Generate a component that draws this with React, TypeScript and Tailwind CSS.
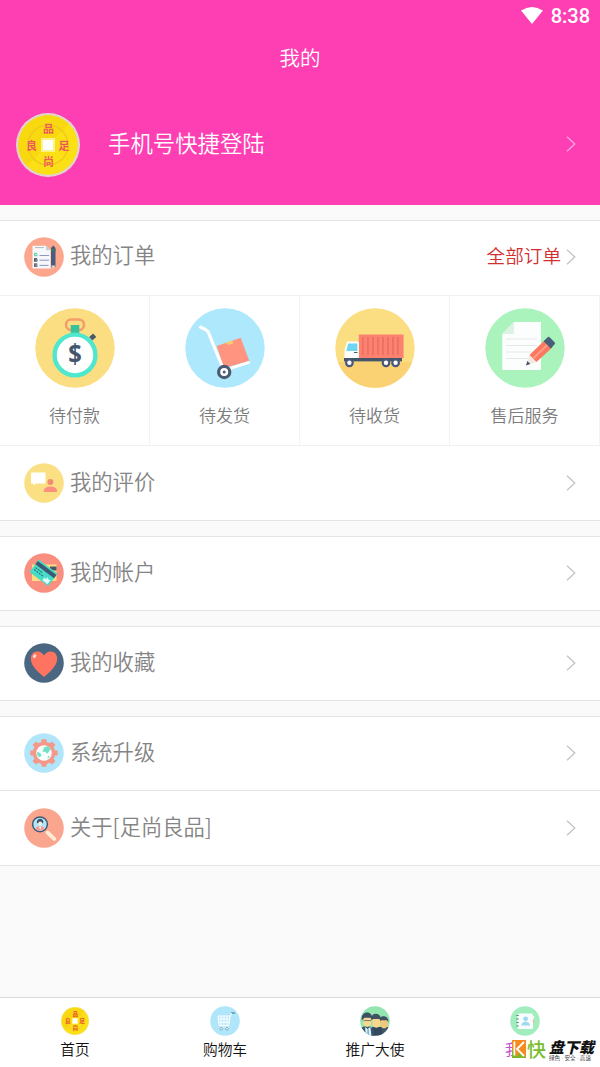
import type { ReactNode } from "react";

type IconProps = { className?: string };

const FONT = "font-['Roboto','Noto_Sans_CJK_SC',sans-serif]";

function Coin({ className, ring = "#e3d3cf", text = "#ee5a5c", size = 11 }: IconProps & { ring?: string; text?: string; size?: number }) {
  return (
    <svg viewBox="0 0 64 64" className={className}>
      <circle cx="32" cy="32" r="32" fill={ring} />
      <circle cx="32" cy="32" r="29.8" fill="#fbe016" />
      <path d="M11 11a29.8 29.8 0 0 0 0 42l42-42a29.8 29.8 0 0 0-42 0z" fill="#f6d50e" opacity=".7" />
      <circle cx="32" cy="32" r="20" fill="none" stroke="#f3c81c" strokeWidth="1.5" />
      <rect x="25" y="25" width="14" height="14" fill="#fbf28c" />
      <rect x="27" y="27" width="10" height="10" fill="#fff" />
      <g fill={text} fontSize={size} fontWeight="700" textAnchor="middle" fontFamily="Noto Sans CJK SC, sans-serif">
        <text x="32.5" y="20">品</text>
        <text x="15.5" y="37">良</text>
        <text x="48" y="37">足</text>
        <text x="32.5" y="52.5">尚</text>
      </g>
    </svg>
  );
}

function StopwatchIcon() {
  return (
    <svg viewBox="0 0 80 80" className="size-20">
      <circle cx="40" cy="40" r="39.7" fill="#fbde82" />
      <rect x="31" y="11.5" width="18" height="10.5" rx="5.2" fill="none" stroke="#f0a06a" strokeWidth="2.6" />
      <rect x="35.7" y="17" width="8.6" height="9" fill="#38c29b" />
      <rect x="55" y="26.7" width="5.4" height="4.6" fill="#47596b" transform="rotate(-42 57.7 29)" />
      <circle cx="40" cy="47" r="20.4" fill="#fff" stroke="#4fe8ce" strokeWidth="4.4" />
      <text x="40" y="56.2" fontSize="27" fontWeight="700" textAnchor="middle" fill="#42566e" textLength="13.5" lengthAdjust="spacingAndGlyphs" fontFamily="Noto Sans, sans-serif">$</text>
    </svg>
  );
}

function TrolleyIcon() {
  return (
    <svg viewBox="0 0 80 80" className="size-20">
      <circle cx="40" cy="40" r="39.7" fill="#aee8fd" />
      <path d="M31.7 38l24-8.3 8.6 23.3L39 60z" fill="#ff9480" />
      <path d="M40.8 34.9l6.6-2.3 1 2.6-5 1.7z" fill="#fcd067" />
      <path d="M15.5 19.2l4.5 2 3 2.3L37 58" fill="none" stroke="#fff" strokeWidth="3.2" strokeLinecap="round" strokeLinejoin="round" />
      <path d="M43 61.2l21.8-7" stroke="#fff" strokeWidth="2.8" />
      <circle cx="39.2" cy="64" r="5.6" fill="#fff" stroke="#4a5b73" strokeWidth="3.2" />
      <circle cx="39.2" cy="64" r="1.5" fill="#4a5b73" />
    </svg>
  );
}

function TruckIcon() {
  return (
    <svg viewBox="0 0 80 80" className="size-20">
      <circle cx="40" cy="40" r="39.7" fill="#fbde82" />
      <path d="M2.8 54h74.4a39.7 39.7 0 0 1-74.4 0z" fill="#fbd273" />
      <rect x="23.8" y="26.5" width="44.8" height="23.5" fill="#fb8270" />
      <path d="M28 29v18M33 29v18M38 29v18M43 29v18M48 29v18M53 29v18M58 29v18M63 29v18" stroke="#e8685a" strokeWidth="1.2" />
      <path d="M12 33.5h11.8V50H9.5v-8z" fill="#fdfdfd" />
      <path d="M13.2 35.5h9.2V43H11.3z" fill="#6fd6f2" />
      <path d="M19 44.5h3.5" stroke="#47596b" strokeWidth="1" />
      <rect x="9" y="50" width="58" height="3.4" fill="#465468" />
      <g fill="#fff" stroke="#47597a" strokeWidth="2.2">
        <circle cx="14.4" cy="54.8" r="3.3" />
        <circle cx="51" cy="54.8" r="3.3" />
        <circle cx="60.6" cy="54.8" r="3.3" />
      </g>
    </svg>
  );
}

function ServiceIcon() {
  return (
    <svg viewBox="0 0 80 80" className="size-20">
      <circle cx="40" cy="40" r="39.7" fill="#abf3bd" />
      <path d="M29 14h27v48H17.3V26z" fill="#fcfdfd" />
      <path d="M29 14v12H17.3z" fill="#dcf3e3" />
      <path d="M21 31h31M21 37.5h31M21 44h28M21 50.5h22" stroke="#e3e8ea" strokeWidth="1" />
      <path d="M41 57.5l3.5-10.5 7 7z" fill="#f3e9e2" />
      <path d="M41 57.5l1.3-4.4 3 3z" fill="#42566e" />
      <path d="M44.5 47L60.2 31.8l7.3 7.4L51.5 54z" fill="#fb7760" />
      <path d="M48.2 50.4l15.6-14.8" stroke="#ff9c86" strokeWidth="2" />
      <path d="M58.6 33.2l4-4q1-1 2 0l5 5q1 1 0 2l-3.8 4.4z" fill="#47607a" />
    </svg>
  );
}

function OrderIcon() {
  return (
    <svg viewBox="0 0 40 40" className="size-10">
      <circle cx="20" cy="20" r="19.8" fill="#fba68d" />
      <path d="M8.5 8.7H22l4.5 4.6v18.2h-18z" fill="#f5f7fa" />
      <path d="M22 8.7v4.6h4.5z" fill="#c5ccd4" />
      <path d="M11 10.6h9" stroke="#a7a9b8" strokeWidth=".8" />
      <path d="M15.5 18.5h9.5M15.5 23.2h9.5M15.5 28.4h9" stroke="#7f8dbb" strokeWidth=".9" />
      <rect x="10" y="15.8" width="3.4" height="3.4" fill="#69cfae" />
      <rect x="10" y="21.2" width="3.4" height="3.4" fill="#364a5d" />
      <rect x="10" y="26.4" width="3.4" height="3.4" fill="#4e596c" />
      <path d="M11 17l1 1 2.4-2.6M11 22.5l1 1 2.4-2.6M11 27.6l1 1 2.4-2.6" fill="none" stroke="#fff" strokeWidth=".6" />
      <path d="M27 11l2.3-2.5 2.2 2.5v19h-4.5z" fill="#4a5b80" />
      <path d="M27 12h4.5v2.4H27z" fill="#3c7563" />
      <path d="M27 28.5h4.5l-2.2 3.2z" fill="#d9d7d8" />
    </svg>
  );
}

function CommentIcon() {
  return (
    <svg viewBox="0 0 40 40" className="size-10">
      <circle cx="20" cy="20" r="19.8" fill="#fbe083" />
      <path d="M7 9.5h14.5v11H12l-2.5 2v-2H7z" fill="#fff" />
      <circle cx="26.4" cy="19" r="3" fill="#f28d6f" />
      <path d="M19.8 29c-.6-4 3-5.6 6.6-5.6s7.2 1.6 6.6 5.6z" fill="#fb9080" />
    </svg>
  );
}

function AccountIcon() {
  return (
    <svg viewBox="0 0 40 40" className="size-10">
      <circle cx="20" cy="20" r="19.8" fill="#fa8f7f" />
      <rect x="8" y="11.5" width="24.5" height="16.5" fill="#fbdc80" />
      <rect x="26" y="13.5" width="6.5" height="4" fill="#49586a" />
      <g transform="rotate(37 19.5 19.8)">
        <rect x="7.8" y="12" width="23.4" height="15.6" rx="1" fill="#45dcc8" />
        <rect x="7.8" y="13.8" width="23.4" height="4" fill="#3f5873" />
        <path d="M10 20.4h8M10 22.8h12" stroke="#2d6b72" strokeWidth="1" strokeDasharray="2 1" />
        <rect x="23" y="23" width="6.5" height="3.5" fill="#c9fff2" />
      </g>
      <path d="M23.3 24l1.2 2.4 2.5 1.2-2.5 1.2-1.2 2.4-1.2-2.4-2.5-1.2 2.5-1.2z" fill="#dffff8" />
    </svg>
  );
}

function HeartIcon() {
  return (
    <svg viewBox="0 0 40 40" className="size-10">
      <circle cx="20" cy="20" r="19.8" fill="#4b6681" />
      <path d="M20 34C16 30.5 6.8 24 6.8 15.6 6.8 11.2 9.6 8.4 13.2 8.4c3.2 0 5.6 1.8 6.8 4 1.2-2.2 3.6-4 6.8-4 3.6 0 6.4 2.8 6.4 7.2C33.2 24 24 30.5 20 34z" fill="#fe7460" />
      <ellipse cx="10.6" cy="13.2" rx="1.5" ry="2" fill="#ffe1da" transform="rotate(35 10.6 13.2)" />
    </svg>
  );
}

function UpgradeIcon() {
  return (
    <svg viewBox="0 0 40 40" className="size-10">
      <circle cx="20" cy="20" r="19.8" fill="#b1e6fa" />
      <g fill="#f5988a">
        <circle cx="20" cy="20" r="11.2" />
        <rect x="17.4" y="6.2" width="5.2" height="27.6" rx="1" />
        <rect x="17.4" y="6.2" width="5.2" height="27.6" rx="1" transform="rotate(45 20 20)" />
        <rect x="17.4" y="6.2" width="5.2" height="27.6" rx="1" transform="rotate(90 20 20)" />
        <rect x="17.4" y="6.2" width="5.2" height="27.6" rx="1" transform="rotate(135 20 20)" />
      </g>
      <circle cx="20" cy="20" r="7.8" fill="#f6fffd" />
      <path d="M20 14.5l4-1.5 3 3-2 2.5-2 2.6-1.5-2.4-3 .2zM13 19l3 .8 1.4 2.4-1.6 2.2-2.4-1.8zM24 23l2 .5-2.4 2.6z" fill="#74e0c8" />
    </svg>
  );
}

function AboutIcon() {
  return (
    <svg viewBox="0 0 40 40" className="size-10">
      <circle cx="20" cy="20" r="19.8" fill="#faa58e" />
      <path d="M23.5 24.5l6.8 6.4" stroke="#fdebd3" strokeWidth="3.8" strokeLinecap="round" />
      <circle cx="16" cy="16.3" r="7.4" fill="#aee6f8" stroke="#425a72" strokeWidth="1.5" />
      <path d="M12.8 14.5c0-5 6.6-5 6.6-.2l-1 1.2h-4.6z" fill="#3e566b" />
      <circle cx="16.2" cy="15.4" r="2" fill="#f8ede6" />
      <path d="M11.8 21c0-4 8.6-4 8.6 0-2.4 2.2-6.2 2.2-8.6 0z" fill="#f59a92" />
      <path d="M15 18.6h2.4l-1.2 3.2z" fill="#fff" />
    </svg>
  );
}

function CartIcon() {
  return (
    <svg viewBox="0 0 30 30" className="size-[30px]">
      <circle cx="15" cy="15" r="14.8" fill="#afe6fa" />
      <path d="M21 7h4" stroke="#49728a" strokeWidth="1.1" />
      <path d="M8 10h12.2l-1.4 9.5H9.2zM8.5 13h11.2M8.8 16.2h10.5M11 10v9.5M14 10v9.5M17 10v9.5M20 11l1.6-4" fill="none" stroke="#fff" strokeWidth="1" />
      <path d="M9 21h10" stroke="#d9f5ff" strokeWidth="1" />
      <circle cx="11.2" cy="22.8" r="1.3" fill="#fff" stroke="#6f98ad" strokeWidth=".8" />
      <circle cx="17" cy="22.8" r="1.3" fill="#fff" stroke="#6f98ad" strokeWidth=".8" />
    </svg>
  );
}

function TeamIcon() {
  return (
    <svg viewBox="0 0 30 30" className="size-[30px]">
      <defs>
        <clipPath id="team">
          <circle cx="15" cy="15" r="14.8" />
        </clipPath>
      </defs>
      <g clipPath="url(#team)">
        <rect width="30" height="30" fill="#93e6ae" />
        <path d="M18 30l2-9h8l3 9z" fill="#3e5368" />
        <path d="M20.6 14h7v6q-3.4 5-7 0z" fill="#f3c778" />
        <path d="M19 16c-1-8 10.2-7.6 9.4 0l-1.6-1.8h-5.6z" fill="#3f5163" />
        <path d="M10 30l2-9h9l2 9z" fill="#34495f" />
        <path d="M12.5 12.6h7.6v6.6q-3.8 5-7.6 0z" fill="#fad58b" />
        <path d="M10.8 14.6c-1-9.4 11.2-9 10.2 0l-2-1.6h-5.8z" fill="#415265" />
        <path d="M0 30v-8l4-1.5h6l3 2.5 1 7z" fill="#3f566c" />
        <path d="M5 21l2.6 2 2.8-2 1 9H6z" fill="#e6f5fb" />
        <path d="M7.4 23h1.4l.6 7H7z" fill="#70b8dc" />
        <path d="M3.4 11.5h7.8v6.6q-3.8 6-7.8 0z" fill="#fbd88e" />
        <path d="M1.8 14.4C0 4.6 12.8 3.6 12.4 13.4l-2.2-1.6H4.6z" fill="#3d5162" />
        <path d="M3.6 14.6h7.4" stroke="#3d5162" strokeWidth=".7" />
      </g>
    </svg>
  );
}

function ContactIcon() {
  return (
    <svg viewBox="0 0 30 30" className="size-[30px]">
      <circle cx="15" cy="15" r="14.8" fill="#a1edbd" />
      <rect x="7.5" y="7.5" width="15.5" height="15.5" rx="1.6" fill="#f8fcff" />
      <rect x="22.8" y="10" width="1.4" height="3" fill="#e9f6ee" />
      <rect x="22.8" y="14" width="1.4" height="3" fill="#f2b7a9" />
      <path d="M6.2 9.5h2.6M6.2 13h2.6M6.2 16.5h2.6M6.2 20h2.6" stroke="#55857c" strokeWidth=".9" />
      <circle cx="15.6" cy="12.8" r="2.4" fill="#9ed8ef" />
      <path d="M11.2 19.6c0-5.2 8.8-5.2 8.8 0z" fill="#9ed8ef" />
    </svg>
  );
}

function Chevron({ className }: IconProps) {
  return (
    <svg viewBox="0 0 10 16" className={`h-4 w-2.5 shrink-0 ${className}`} fill="none" stroke="currentColor" strokeWidth="1.3">
      <path d="M1 .8L8.8 8 1 15.2" />
    </svg>
  );
}

function Row({ icon, label, extra, className }: { icon: ReactNode; label: string; extra?: ReactNode; className: string }) {
  return (
    <div className={`flex h-[75px] items-center border-[#e4e4e4] bg-white px-6 ${className}`}>
      {icon}
      <span className="ml-1.5 flex-1 pb-[5px] font-['Noto_Sans_CJK_SC',sans-serif] text-[21.3px] leading-8 font-[350] text-[#848484]">
        {label}
      </span>
      {extra}
      <Chevron className="text-[#c4c4c4]" />
    </div>
  );
}

const ORDER_STATES = [
  { label: "待付款", icon: <StopwatchIcon /> },
  { label: "待发货", icon: <TrolleyIcon /> },
  { label: "待收货", icon: <TruckIcon /> },
  { label: "售后服务", icon: <ServiceIcon /> },
];

const TABS = [
  { label: "首页", icon: <Coin className="size-7" ring="#f6e04a" text="#e8552f" size={13} /> },
  { label: "购物车", icon: <CartIcon /> },
  { label: "推广大使", icon: <TeamIcon /> },
];

function Watermark() {
  return (
    <div className="absolute top-[42px] left-[62px] flex items-start">
      <svg viewBox="0 0 14 18" className="h-[18px] w-3.5">
        <path d="M0 0h14v18H0z" fill="#f58a1f" />
        <path d="M0 9l6 9H0zM8 11l6 7H5z" fill="#79b928" />
        <path d="M2.4 1.6v14M12 2L5 9l7 7" fill="none" stroke="#fff" strokeWidth="1.8" />
      </svg>
      <span className="ml-px pt-0.5 text-[19px] leading-[18px] font-medium text-[#78bd2b]">快</span>
      <div className="ml-[3px] flex flex-col pt-0.5">
        <span className="text-[15px] leading-[12px] font-black whitespace-nowrap text-[#111] italic">盘下载</span>
        <span className="mt-px text-[5.6px] leading-[6px] whitespace-nowrap text-[#444]">绿色 · 安全 · 高速</span>
      </div>
    </div>
  );
}

export default function App() {
  return (
    <div className={`flex h-[1067px] w-[600px] flex-col overflow-hidden bg-[#fafafa] ${FONT}`}>
      <header className="flex h-[205px] shrink-0 flex-col bg-[#fd3fb3] text-white">
        <div className="flex h-8 items-center justify-end gap-2 pr-2.5">
          <svg viewBox="0 0 22 17" className="mb-0.5 h-[17px] w-[22px]" fill="#fff">
            <path d="M0 3.6Q11-3.4 22 3.6L11 17z" />
          </svg>
          <span className="text-[20px] leading-8 font-medium">8:38</span>
        </div>
        <h1 className="h-[52px] pt-px text-center text-[20.5px] leading-[52px] font-[350]">我的</h1>
        <div className="flex h-[121px] items-center px-4">
          <Coin className="size-16" />
          <span className="ml-7 flex-1 pb-0.5 text-[22.4px] leading-8 font-[350]">手机号快捷登陆</span>
          <Chevron className="mr-2 mb-0.5 text-[#fea6dc]" />
        </div>
      </header>

      <main className="flex-1">
        <section className="mt-[15px]">
          <Row
            icon={<OrderIcon />}
            label="我的订单"
            className="border-t pb-[3px]"
            extra={<span className="mr-[5px] text-[18.6px] leading-8 font-[350] text-[#d22f2f]">全部订单</span>}
          />
          <div className="grid h-[151px] grid-cols-4 border-y border-[#f1f1f1] bg-white">
            {ORDER_STATES.map((s) => (
              <div key={s.label} className="flex flex-col items-center border-r border-[#f3f3f3] pt-3">
                {s.icon}
                <span className="mt-4 text-[17px] leading-6 font-[350] text-[#7c7c7c]">{s.label}</span>
              </div>
            ))}
          </div>
          <Row icon={<CommentIcon />} label="我的评价" className="border-b" />
        </section>

        <section className="mt-[15px]">
          <Row icon={<AccountIcon />} label="我的帐户" className="border-y pb-px" />
        </section>
        <section className="mt-[15px]">
          <Row icon={<HeartIcon />} label="我的收藏" className="border-y pb-px" />
        </section>
        <section className="mt-[15px]">
          <Row icon={<UpgradeIcon />} label="系统升级" className="border-y pb-px" />
          <Row icon={<AboutIcon />} label="关于[足尚良品]" className="border-b" />
        </section>
      </main>

      <nav className="grid h-[70px] shrink-0 grid-cols-4 border-t border-[#d9d9d9] bg-white text-[14.7px] leading-5 text-[#111]">
        {TABS.map((t) => (
          <div key={t.label} className="flex flex-col items-center pt-[7px]">
            <div className="flex h-[31px] items-center">{t.icon}</div>
            <span className="mt-1 font-[350]">{t.label}</span>
          </div>
        ))}
        <div className="relative flex flex-col items-center pt-[7px]">
          <div className="flex h-[31px] items-center">
            <ContactIcon />
          </div>
          <span className="mt-1 w-10 text-[#c64bd0]">我</span>
          <Watermark />
        </div>
      </nav>
    </div>
  );
}
